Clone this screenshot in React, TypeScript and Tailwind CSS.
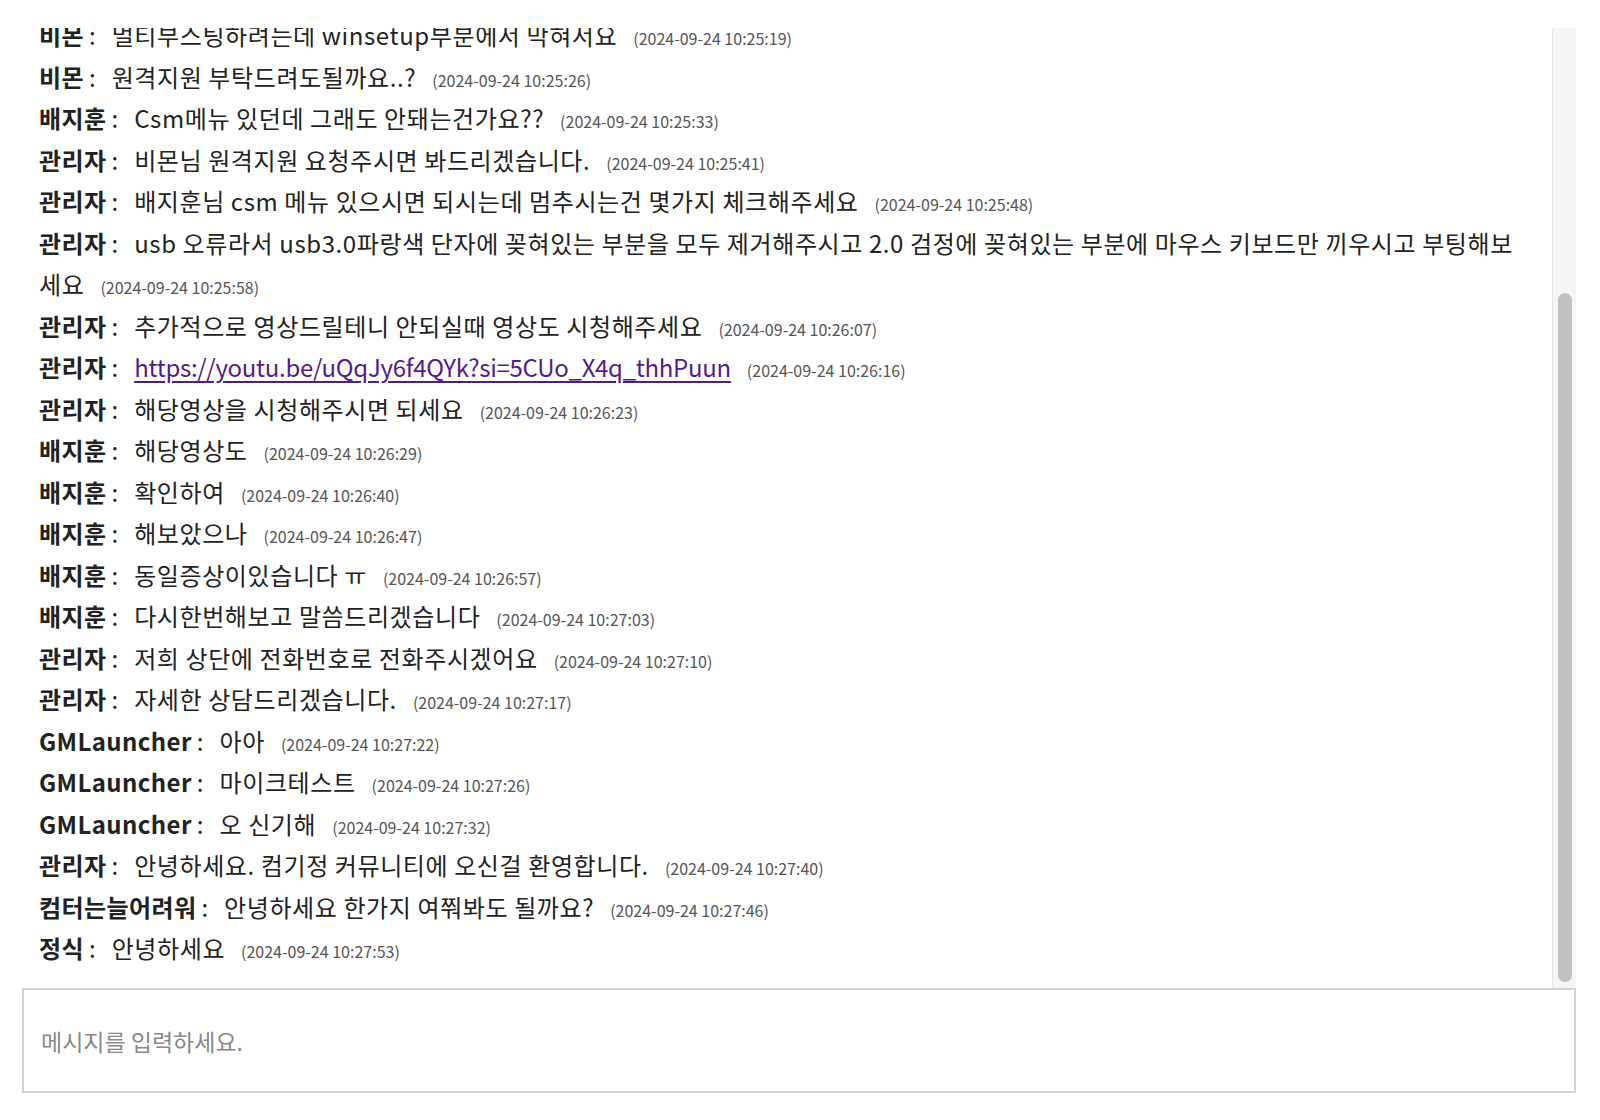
import * as React from 'react'
import { useLayoutEffect, useRef } from 'react'

type Msg = { name: string; text: string; time: string; link?: boolean }

const messages: Msg[] = [
	{ name: '비몬', text: '안녕하세요', time: '2024-09-24 10:24:02' },
	{ name: '관리자', text: '네 안녕하세요', time: '2024-09-24 10:24:10' },
	{ name: '비몬', text: '질문 하나 드려도 될까요?', time: '2024-09-24 10:24:18' },
	{ name: '관리자', text: '네 말씀하세요', time: '2024-09-24 10:24:25' },
	{ name: '배지훈', text: '저도 같은 문제가 있어서요', time: '2024-09-24 10:24:37' },
	{ name: '비몬', text: 'ssd 새로 달았는데', time: '2024-09-24 10:24:49' },
	{ name: '비몬', text: '윈도우 설치가 안되네요', time: '2024-09-24 10:25:01' },
	{ name: '관리자', text: '어느 단계에서 멈추시나요?', time: '2024-09-24 10:25:10' },
	{ name: '비몬', text: '멀티부스팅하려는데 winsetup부분에서 막혀서요', time: '2024-09-24 10:25:19' },
	{ name: '비몬', text: '원격지원 부탁드려도될까요..?', time: '2024-09-24 10:25:26' },
	{ name: '배지훈', text: 'Csm메뉴 있던데 그래도 안돼는건가요??', time: '2024-09-24 10:25:33' },
	{ name: '관리자', text: '비몬님 원격지원 요청주시면 봐드리겠습니다.', time: '2024-09-24 10:25:41' },
	{ name: '관리자', text: '배지훈님 csm 메뉴 있으시면 되시는데 멈추시는건 몇가지 체크해주세요', time: '2024-09-24 10:25:48' },
	{
		name: '관리자',
		text: 'usb 오류라서 usb3.0파랑색 단자에 꽂혀있는 부분을 모두 제거해주시고 2.0 검정에 꽂혀있는 부분에 마우스 키보드만 끼우시고 부팅해보세요',
		time: '2024-09-24 10:25:58',
	},
	{ name: '관리자', text: '추가적으로 영상드릴테니 안되실때 영상도 시청해주세요', time: '2024-09-24 10:26:07' },
	{ name: '관리자', text: 'https://youtu.be/uQqJy6f4QYk?si=5CUo_X4q_thhPuun', time: '2024-09-24 10:26:16', link: true },
	{ name: '관리자', text: '해당영상을 시청해주시면 되세요', time: '2024-09-24 10:26:23' },
	{ name: '배지훈', text: '해당영상도', time: '2024-09-24 10:26:29' },
	{ name: '배지훈', text: '확인하여', time: '2024-09-24 10:26:40' },
	{ name: '배지훈', text: '해보았으나', time: '2024-09-24 10:26:47' },
	{ name: '배지훈', text: '동일증상이있습니다 ㅠ', time: '2024-09-24 10:26:57' },
	{ name: '배지훈', text: '다시한번해보고 말씀드리겠습니다', time: '2024-09-24 10:27:03' },
	{ name: '관리자', text: '저희 상단에 전화번호로 전화주시겠어요', time: '2024-09-24 10:27:10' },
	{ name: '관리자', text: '자세한 상담드리겠습니다.', time: '2024-09-24 10:27:17' },
	{ name: 'GMLauncher', text: '아아', time: '2024-09-24 10:27:22' },
	{ name: 'GMLauncher', text: '마이크테스트', time: '2024-09-24 10:27:26' },
	{ name: 'GMLauncher', text: '오 신기해', time: '2024-09-24 10:27:32' },
	{ name: '관리자', text: '안녕하세요. 컴기정 커뮤니티에 오신걸 환영합니다.', time: '2024-09-24 10:27:40' },
	{ name: '컴터는늘어려워', text: '안녕하세요 한가지 여쭤봐도 될까요?', time: '2024-09-24 10:27:46' },
	{ name: '정식', text: '안녕하세요', time: '2024-09-24 10:27:53' },
]

export default function App() {
	const listRef = useRef<HTMLDivElement>(null)

	// 채팅창은 항상 맨 아래로
	useLayoutEffect(() => {
		if (listRef.current) listRef.current.scrollTop = listRef.current.scrollHeight
	}, [])

	return (
		<div className="min-h-screen bg-white pt-[28px] pl-[22px] pr-[24px] font-['Noto_Sans_CJK_KR',sans-serif] text-[#222]">
			<div className="flex h-[960px]">
				<div ref={listRef} className="min-w-0 flex-1 overflow-hidden pt-[24px] pb-[19px] pl-[17px] pr-[30px]">
					{messages.map((m, i) => (
						<p key={i} className="text-[24px] leading-[41.5px]">
							<strong className="font-bold tracking-[0.4px]">{m.name}</strong>
							<span className="ml-[5px] mr-[16px] leading-none">:</span>
							{m.link ? (
								<a href={m.text} className="tracking-[-0.3px] text-[#551a8b] underline underline-offset-[4px]">
									{m.text}
								</a>
							) : (
								<span className="tracking-[0.6px]">{m.text}</span>
							)}
							<span className="ml-[16px] text-[16px] leading-none text-[#555]">({m.time})</span>
						</p>
					))}
				</div>
				{/* scrollbar */}
				<div className="w-[24px] shrink-0 border-l border-[#e6e6e6] bg-[#f5f5f5] pt-[265px] pb-[6px] pl-[5px] pr-[4px]">
					<div className="h-full rounded-full bg-[#c1c1c1]" />
				</div>
			</div>
			<input
				type="text"
				placeholder="메시지를 입력하세요."
				className="block h-[105px] w-full border-2 border-[#d2d2d2] px-[17px] text-[23px] outline-none placeholder:text-[#888]"
			/>
		</div>
	)
}
